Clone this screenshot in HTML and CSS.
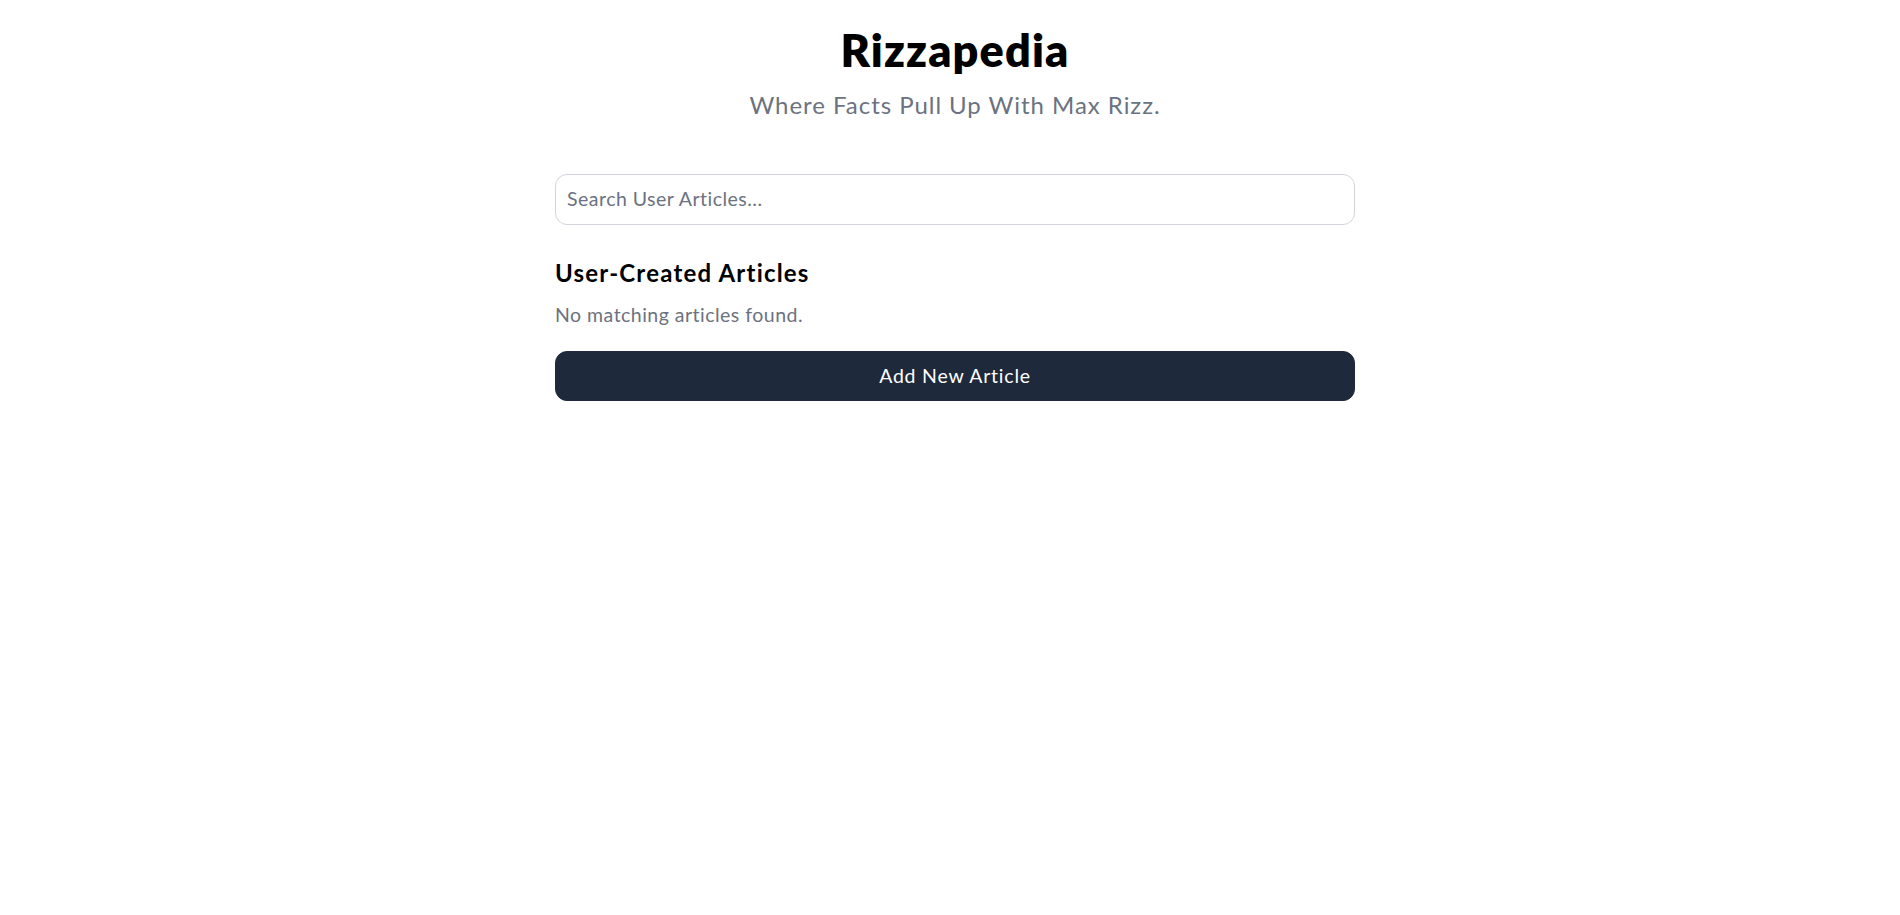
FILE: index.html
```html
<!DOCTYPE html>
<html lang="en">
<head>
<meta charset="utf-8">
<title>Rizzapedia</title>
<link rel="stylesheet" href="styles.css">
</head>
<body>
<main class="page">
  <header class="hero">
    <h1 class="title">Rizzapedia</h1>
    <p class="tagline">Where Facts Pull Up With Max Rizz.</p>
  </header>
  <input class="search" type="text" placeholder="Search User Articles...">
  <section class="articles">
    <h2 class="section-title">User-Created Articles</h2>
    <p class="empty">No matching articles found.</p>
    <button class="add-btn" type="button">Add New Article</button>
  </section>
</main>
</body>
</html>
```
FILE: styles.css
```css
* { box-sizing: border-box; }
html, body { margin: 0; background: #ffffff; }
body {
  padding-left: 10px;
  font-family: Lato, "Open Sans", sans-serif;
  letter-spacing: 0.03em;
  color: #000;
}
.page {
  width: 800px;
  margin: 0 auto;
  display: flex;
  flex-direction: column;
}
.hero {
  display: flex;
  flex-direction: column;
  align-items: center;
  padding-top: 23px;
}
.title {
  margin: 0;
  font-size: 45px;
  line-height: 54px;
  font-weight: 800;
  letter-spacing: 0.025em;
}
.tagline {
  margin: 12px 0 0;
  font-size: 24px;
  line-height: 32px;
  letter-spacing: 0.04em;
  color: #6b7280;
}
.search {
  margin-top: 53px;
  width: 100%;
  height: 51px;
  padding: 11px 11px 13px;
  border: 1px solid #d1d5db;
  border-radius: 12px;
  font-family: inherit;
  letter-spacing: inherit;
  font-size: 19.5px;
  line-height: 25px;
  color: #111827;
  outline: none;
}
.search::placeholder { color: #6b7280; opacity: 1; }
.articles {
  display: flex;
  flex-direction: column;
}
.section-title {
  margin: 32px 0 0;
  font-size: 24px;
  line-height: 32px;
  font-weight: 700;
  letter-spacing: 0.05em;
}
.empty {
  margin: 12px 0 0;
  font-size: 19.5px;
  line-height: 28px;
  color: #6b7280;
}
.add-btn {
  margin-top: 22px;
  width: 100%;
  height: 50px;
  border: 1px solid #1e293b;
  border-radius: 12px;
  background: #1e293b;
  color: #ffffff;
  font-family: inherit;
  letter-spacing: 0.04em;
  font-size: 19.5px;
  line-height: 24px;
  cursor: pointer;
}
```
